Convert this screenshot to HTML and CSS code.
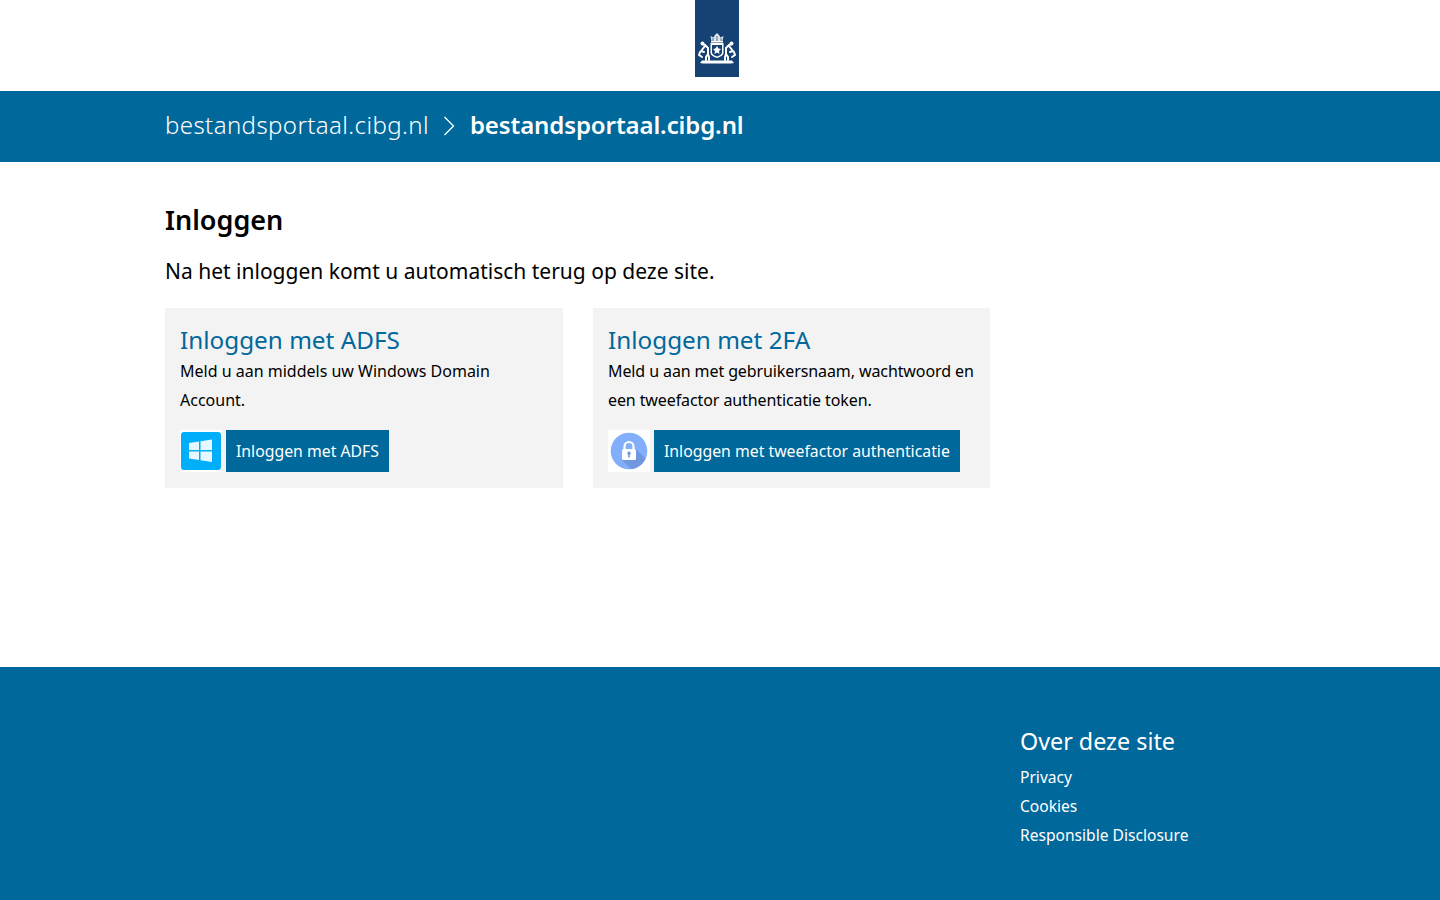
FILE: index.html

```html
<!DOCTYPE html>
<html lang="nl">
<head>
  <meta charset="UTF-8" />
  <title>Inloggen - bestandsportaal.cibg.nl</title>
  <link rel="stylesheet" href="styles.css">
</head>
<body>

  <header class="top">
    <div class="logo">
      <svg width="44" height="77" viewBox="0 0 44 77">
        <rect width="44" height="77" fill="#154273"/>
        <!-- crown -->
        <path d="M16.500 41l-1-5 3 1.500 1.500-2.500 2-2 2 2 1.500 2.500 3-1.500-1 5z" fill="#dfe5ec"/>
        <path d="M18 38v3M22 36v5M26 38v3" stroke="#154273" stroke-width=".7"/>
        <rect x="16" y="41" width="12" height="1.500" fill="#fff"/>
        <!-- shield -->
        <path d="M15.500 43h13v9.500c0 3-3.500 4.500-6.500 5.500-3-1-6.500-2.500-6.500-5.500z" fill="#fff"/>
        <path d="M17 45h10v7.500c0 2-2.500 3.200-5 4-2.500-.8-5-2-5-4z" fill="#154273"/>
        <path d="M22 46l1.500 2.500 2.500.5-2 2 .5 3-2.500-1.500-2.500 1.500.5-3-2-2 2.500-.5z" fill="#fff"/>
        <!-- lions -->
        <g fill="none" stroke="#fff" stroke-width="2" stroke-linecap="round" stroke-linejoin="round">
          <path d="M7 44l3 1 3 3v6l-2 3v3M13 54l1 3v3M10 46l-4 5 3 1M7 57l-3-2 1-3"/>
          <path d="M37 44l-3 1-3 3v6l2 3v3M31 54l-1 3v3M34 46l4 5-3 1M37 57l3-2-1-3"/>
        </g>
        <circle cx="7.500" cy="43.500" r="2" fill="#fff"/>
        <circle cx="36.500" cy="43.500" r="2" fill="#fff"/>
        <!-- ribbon -->
        <path d="M7 60.500h30l2 2.500-3 .5H8l-3-.5z" fill="#fff"/>
      </svg>
    </div>
  </header>

  <div class="bar">
    <div class="wrap bar-inner">
      <span class="crumb">bestandsportaal.cibg.nl</span>
      <svg class="chevron" width="12" height="20" viewBox="0 0 12 20">
        <path d="M1.500 1l9 9-9 9" fill="none" stroke="#fff" stroke-width="1.300"/>
      </svg>
      <span class="crumb crumb-current">bestandsportaal.cibg.nl</span>
    </div>
  </div>

  <main class="wrap content">
    <h1>Inloggen</h1>
    <p class="intro">Na het inloggen komt u automatisch terug op deze site.</p>

    <div class="cards">
      <section class="card">
        <h2>Inloggen met ADFS</h2>
        <p>Meld u aan middels uw Windows Domain Account.</p>
        <div class="action">
          <span class="icon">
            <svg width="42" height="42" viewBox="0 0 42 42">
              <rect x="1" y="2" width="40" height="38" rx="3" fill="#00aefa"/>
              <path d="M9 13l10-1.500v8.500H9zM20.500 11.300L32 9.500V20H20.500zM9 21.500h10V30l-10-1.500zM20.500 21.500H32V32l-11.500-1.800z" fill="#fff" fill-opacity=".9"/>
            </svg>
          </span>
          <a class="btn" href="#">Inloggen met ADFS</a>
        </div>
      </section>

      <section class="card">
        <h2>Inloggen met 2FA</h2>
        <p class="tight">Meld u aan met gebruikersnaam, wachtwoord en een tweefactor authenticatie token.</p>
        <div class="action">
          <span class="icon">
            <svg width="42" height="42" viewBox="0 0 42 42">
              <clipPath id="disc"><circle cx="21" cy="21" r="18.300"/></clipPath>
              <circle cx="21" cy="21" r="18.300" fill="#82aefb"/>
              <path d="M28 19l14 14v9H26L14 30z" fill="#7097e0" clip-path="url(#disc)"/>
              <path d="M16.500 19.500v-3a4.500 4.500 0 0 1 9 0v3" fill="none" stroke="#fff" stroke-width="2.200"/>
              <rect x="14" y="19" width="14" height="11" rx="1.500" fill="#fff"/>
              <circle cx="21" cy="23.300" r="1.700" fill="#7097e0"/>
              <rect x="20.200" y="24" width="1.600" height="3.500" fill="#7097e0"/>
            </svg>
          </span>
          <a class="btn" href="#">Inloggen met tweefactor authenticatie</a>
        </div>
      </section>
    </div>
  </main>

  <footer class="foot">
    <div class="foot-col">
      <h3>Over deze site</h3>
      <ul>
        <li><a href="#">Privacy</a></li>
        <li><a href="#">Cookies</a></li>
        <li><a href="#">Responsible Disclosure</a></li>
      </ul>
    </div>
  </footer>

</body>
</html>
```

FILE: styles.css

```css
body {
  margin: 0;
  font-family: "Noto Sans", Arial, sans-serif;
  color: #000;
  background: #fff;
}
a {
  color: #fff;
  text-decoration: none;
}
.wrap {
  margin-left: 165px;
}
.top {
  height: 91px;
  padding-left: 695px;
  box-sizing: border-box;
}
.logo {
  width: 44px;
  height: 77px;
}
.logo svg {
  display: block;
}
.bar {
  height: 71px;
  background: #00689b;
  color: #fff;
}
.bar-inner {
  display: flex;
  align-items: center;
  height: 66px;
  gap: 14.500px;
}
.chevron {
  margin-top: 3px;
}
.crumb {
  font-size: 24px;
  font-weight: 300;
  letter-spacing: 0.400px;
}
.crumb-current {
  font-weight: 600;
  letter-spacing: -0.100px;
}
.content {
  height: 505px;
  box-sizing: border-box;
  padding-top: 39px;
}
h1 {
  margin: 0;
  font-size: 27px;
  line-height: 37px;
  font-weight: 600;
}
.intro {
  margin: 16px 0 0;
  font-size: 21px;
  line-height: 34px;
}
.cards {
  display: grid;
  grid-template-columns: 398px 397px;
  gap: 30px;
  margin-top: 20px;
}
.card {
  height: 180px;
  box-sizing: border-box;
  padding: 16px 15px 15px;
  background: #f3f3f3;
}
.card h2 {
  margin: 0;
  font-size: 24.300px;
  line-height: 32px;
  font-weight: 400;
  color: #00689b;
}
.card p {
  margin: 1px 0 0;
  height: 58px;
  font-size: 16px;
  line-height: 29px;
}
.card p.tight {
  letter-spacing: -0.100px;
}
.action {
  display: flex;
  gap: 4px;
  margin-top: 15px;
}
.icon {
  width: 42px;
  height: 42px;
  background: #fff;
}
.icon svg {
  display: block;
}
.btn {
  display: block;
  height: 42px;
  padding: 0 10px;
  font-size: 15.800px;
  line-height: 42px;
  background: #00689b;
}
.foot {
  height: 233px;
  box-sizing: border-box;
  padding: 56px 0 0 1020px;
  background: #00689b;
  color: #fff;
}
.foot h3 {
  margin: 0;
  font-size: 23.300px;
  line-height: 36px;
  font-weight: 400;
}
.foot ul {
  margin: 4px 0 0;
  padding: 0;
  list-style: none;
}
.foot li {
  font-size: 15.600px;
  line-height: 29px;
}
```
